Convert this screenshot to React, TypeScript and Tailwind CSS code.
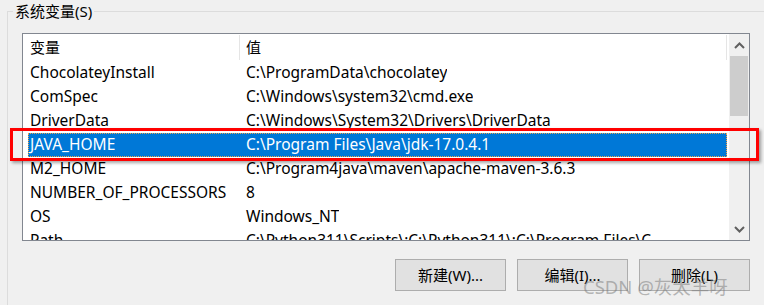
import React from "react";

const rows: [string, string][] = [
  ["ChocolateyInstall", "C:\\ProgramData\\chocolatey"],
  ["ComSpec", "C:\\Windows\\system32\\cmd.exe"],
  ["DriverData", "C:\\Windows\\System32\\Drivers\\DriverData"],
  ["JAVA_HOME", "C:\\Program Files\\Java\\jdk-17.0.4.1"],
  ["M2_HOME", "C:\\Program4java\\maven\\apache-maven-3.6.3"],
  ["NUMBER_OF_PROCESSORS", "8"],
  ["OS", "Windows_NT"],
  ["Path", "C:\\Python311\\Scripts\\;C:\\Python311\\;C:\\Program Files\\C"],
];

const font = "font-['Noto_Sans','Noto_Sans_CJK_SC',sans-serif]";

function Btn({ label }: { label: string }) {
  return (
    <div className="w-[111px] h-[32px] border border-[#adadad] bg-[#e1e1e1] flex items-center justify-center text-[15px] text-black">
      {label}
    </div>
  );
}

export default function App() {
  return (
    <div className={`w-[764px] h-[305px] bg-[#f0f0f0] relative overflow-hidden ${font} text-black`}>
      <fieldset className="ml-[7px] mt-[1px] border-t border-l border-[#dcdcdc] h-[320px]">
        <legend className="ml-[5px] px-[2px] text-[15px] leading-[20px]">系统变量(S)</legend>
        <div className="pl-[14px]">
          <div className="mt-[12px] w-[728px] h-[208px] border border-[#828790] bg-white flex">
            <div className="flex-1 flex flex-col overflow-hidden">
              <div className="h-[27px] flex shrink-0">
                <div className="w-[217px] flex items-center pl-[7px] text-[15px] border-r border-[#e5e5e5] my-[1px]">变量</div>
                <div className="w-[487px] flex items-center pl-[6px] text-[15px] border-r border-[#e5e5e5] my-[1px]">值</div>
              </div>
              {rows.map(([k, v]) => {
                const sel = k === "JAVA_HOME";
                return (
                  <div key={k} className="h-[24px] flex shrink-0 pl-[5px] pr-[2px]">
                    <div
                      className={`flex-1 flex items-center text-[15.5px] whitespace-nowrap ${
                        sel ? "bg-[#0078d7] text-white border border-dotted border-[#f5a24a]" : "border border-transparent"
                      }`}
                    >
                      <div className="w-[211px] pl-[1px] overflow-hidden">{k}</div>
                      <div className="pl-[6px] overflow-hidden">{v}</div>
                    </div>
                  </div>
                );
              })}
            </div>
            <div className="w-[20px] bg-[#f0f0f0] flex flex-col shrink-0">
              <div className="h-[22px] flex items-center justify-center">
                <svg width="11" height="7" viewBox="0 0 11 7">
                  <path d="M1 6 L5.5 1.5 L10 6" stroke="#606060" strokeWidth="2" fill="none" />
                </svg>
              </div>
              <div className="h-[60px] mx-[1px] bg-[#cdcdcd]" />
              <div className="flex-1" />
              <div className="h-[22px] flex items-center justify-center">
                <svg width="11" height="7" viewBox="0 0 11 7">
                  <path d="M1 1 L5.5 5.5 L10 1" stroke="#606060" strokeWidth="2" fill="none" />
                </svg>
              </div>
            </div>
          </div>
          <div className="flex justify-end gap-[11px] w-[728px] mt-[18px]">
            <Btn label="新建(W)..." />
            <Btn label="编辑(I)..." />
            <Btn label="删除(L)" />
          </div>
        </div>
      </fieldset>
      <div className="absolute left-[10px] top-[128px] w-[749px] h-[33px] border-[3px] border-[#ff0000] shadow-[2px_2px_3px_rgba(0,0,0,0.35)]" />
      <div className="absolute left-[583px] top-[273px] text-[18.5px] text-[rgba(120,120,120,0.5)] whitespace-nowrap">
        CSDN @灰太羊呀
      </div>
    </div>
  );
}
